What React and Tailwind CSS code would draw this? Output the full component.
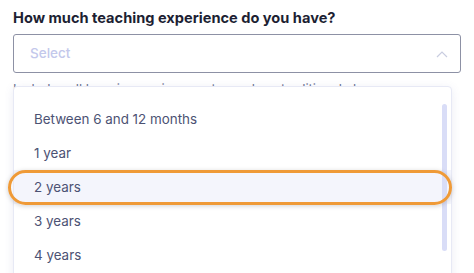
import React from 'react';

export default function App() {
  const options = ['Between 6 and 12 months', '1 year', '2 years', '3 years', '4 years'];

  return (
    <div className="relative w-[474px] h-[273px] overflow-hidden bg-white px-[13px] pt-[8px] font-['Inter',sans-serif]">
      <h2 className="text-[14.6px] leading-[20px] font-bold text-[#1d1f33]">
        How much teaching experience do you have?
      </h2>

      <div className="mt-[6px] h-[39px] border border-[#8d91a5] rounded-[3px] flex items-center justify-between pl-[16px] pr-[12px]">
        <span className="text-[13.5px] font-medium text-[#c3c8eb]">Select</span>
        <svg width="12" height="8" viewBox="0 0 12 8" fill="none">
          <path d="M1 7L6 2L11 7" stroke="#c9cde0" strokeWidth="1.2" />
        </svg>
      </div>

      <p className="mt-[7px] text-[13px] leading-[18px] text-[#6b7290] whitespace-nowrap">
        Includes all learning environments, such as traditional classrooms
      </p>

      {/* open dropdown */}
      <div className="absolute left-[13px] top-[86px] w-[439px] h-[200px] bg-white border border-[#e7e9f5] rounded-[4px] shadow-[0_2px_10px_rgba(90,100,170,0.12)] overflow-hidden">
        <ul className="pt-[15px]">
          {options.map((o) => (
            <li
              key={o}
              className={`h-[34px] flex items-center pl-[20px] text-[13.4px] text-[#4c5273] ${o === '2 years' ? 'bg-[#f4f5fc]' : ''}`}
            >
              {o}
            </li>
          ))}
        </ul>
        <div className="absolute right-[4px] top-[17px] w-[5px] h-[147px] rounded-full bg-[#d9ddf7]" />
      </div>

      {/* highlight ring */}
      <div className="absolute left-[8px] top-[170px] w-[444px] h-[35px] rounded-full border-[3px] border-[#ef9a37] shadow-[0_1px_5px_rgba(0,0,0,0.18)]" />
    </div>
  );
}
